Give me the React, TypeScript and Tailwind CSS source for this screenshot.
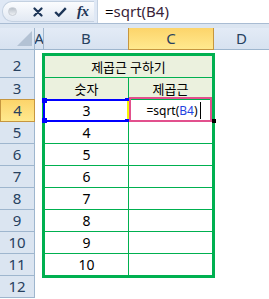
import React from "react";

const rows = [3, 4, 5, 6, 7, 8, 9, 10];

export default function App() {
  return (
    <div className="w-[269px] h-[299px] overflow-hidden bg-white font-['Noto_Sans','Noto_Sans_CJK_KR',sans-serif] select-none">
      {/* formula bar */}
      <div className="h-[24px] flex bg-[#dfe8f5] border-b border-[#a9bcd3]">
        <div className="ml-[2px] mt-[1px] h-[21px] w-[92px] rounded-l-[10px] bg-gradient-to-b from-[#fbfcfe] to-[#e2e9f3] border border-[#c4d1e1] border-r-0 flex items-center">
          <div className="ml-[5px] w-[9px] h-[9px] rounded-full bg-gradient-to-b from-[#b9c0c9] to-[#eef1f5] border border-[#c9ced6]" />
          <svg className="ml-[16px]" width="10" height="10" viewBox="0 0 10 10">
            <path d="M1.5 1.5 L8.5 8.5 M8.5 1.5 L1.5 8.5" stroke="#1d3557" strokeWidth="2.2" strokeLinecap="round" />
          </svg>
          <svg className="ml-[11px]" width="13" height="10" viewBox="0 0 13 10">
            <path d="M1.2 5 L4.8 8.5 L11.8 1.2" stroke="#1d3557" strokeWidth="2.4" fill="none" strokeLinejoin="miter" />
          </svg>
          <span className="ml-[10px] text-[15px] leading-none italic font-bold text-[#1d3557] font-['Liberation_Serif',serif] tracking-[-0.5px]">
            fx
          </span>
        </div>
        <div className="ml-[3px] flex-1 bg-white border-l border-[#c4d1e1] flex items-center pl-[7px] text-[15px] leading-none pb-[1px]">
          <span className="text-black">=</span>
          <span className="text-[#3a1f3a]">sqrt(B4)</span>
        </div>
      </div>
      <div className="h-[4px] bg-[#dbe5f1]" />
      {/* column headers */}
      <div className="h-[22px] flex bg-gradient-to-b from-[#e3ebf6] to-[#d7e2f0] border-b border-[#9eb6ce] text-[15px] text-[#27415f] leading-none">
        <div className="w-[35px] border-r border-[#9eb6ce] relative">
          <svg className="absolute left-0 top-0" width="34" height="21" viewBox="0 0 34 21">
            <path d="M17 18 L32 18 L32 3 Z" fill="#b3c2d4" />
          </svg>
        </div>
        <div className="w-[9px] border-r border-[#9eb6ce] flex items-center justify-center overflow-hidden">A</div>
        <div className="w-[85px] border-r border-[#9eb6ce] flex items-center justify-center">B</div>
        <div className="w-[85px] border border-t-0 border-[#c6963f] bg-gradient-to-b from-[#fcd46a] to-[#ffe98e] flex items-center justify-center -mb-[1px] -ml-[1px] w-[86px]">
          C
        </div>
        <div className="flex-1 flex items-center justify-center">D</div>
      </div>
      {/* body */}
      <div className="flex">
        <div className="w-[35px] shrink-0 border-r border-[#9eb6ce] bg-[#dbe5f1] text-[15px] text-[#27415f] leading-none">
          <div className="h-[28px] border-b border-[#9eb6ce] flex items-center justify-center pt-[3px]">2</div>
          {[3, 4, 5, 6, 7, 8, 9, 10, 11, 12].map((n) =>
            n === 4 ? (
              <div
                key={n}
                className="h-[23px] -mt-[1px] border border-[#c6963f] bg-gradient-to-b from-[#fcd46a] to-[#ffe98e] flex items-center justify-center -mr-[1px]"
              >
                {n}
              </div>
            ) : (
              <div key={n} className="h-[22px] border-b border-[#9eb6ce] flex items-center justify-center">
                {n}
              </div>
            )
          )}
        </div>
        <div className="flex-1 bg-white pl-[7px] pt-[3px]">
          <div className="relative w-[173px] border-[3px] border-[#00b050] text-black">
            <div className="h-[22px] border-b border-[#00b050] bg-[#ebf1de] flex items-center justify-center text-[13px] leading-none font-['Noto_Sans_CJK_KR',sans-serif]">
              제곱근 구하기
            </div>
            <div className="h-[22px] flex border-b border-[#00b050] bg-[#ebf1de] text-[13px] leading-none font-['Noto_Sans_CJK_KR',sans-serif]">
              <div className="w-[84px] border-r border-[#00b050] flex items-center justify-center">숫자</div>
              <div className="flex-1 flex items-center justify-center">제곱근</div>
            </div>
            {rows.map((v, i) => (
              <div
                key={v}
                className={`flex text-[14px] leading-none ${i === rows.length - 1 ? "h-[21px]" : "h-[22px] border-b border-[#00b050]"}`}
              >
                <div className="w-[84px] border-r border-[#00b050] flex items-center justify-center">{v}</div>
                <div className="flex-1 flex items-center justify-center text-[12px]">
                  {i === 0 ? (
                    <span className="flex items-center ml-[6px]">
                      <span>=sqrt(</span>
                      <span className="text-[#1f45e0]">B4</span>
                      <span>)</span>
                      <span className="ml-[2px] w-[1px] h-[17px] bg-black" />
                    </span>
                  ) : null}
                </div>
              </div>
            ))}
            {/* B4 range finder */}
            <div className="absolute left-[-2px] top-[43px] w-[85px] h-[23px] border-2 border-r-0 border-[#0000ff]" />
            <div className="absolute left-[82px] top-[43px] w-[2px] h-[23px] bg-[#f5f500]" />
            <div className="absolute left-[-3px] top-[42px] w-[5px] h-[5px] bg-[#0000ff]" />
            <div className="absolute left-[-3px] top-[62px] w-[5px] h-[5px] bg-[#0000ff]" />
            <div className="absolute left-[80px] top-[42px] w-[4px] h-[3px] bg-[#0000ff]" />
            <div className="absolute left-[80px] top-[63px] w-[4px] h-[3px] bg-[#0000ff]" />
            {/* C4 active */}
            <div className="absolute left-[84px] top-[41px] w-[83px] h-[25px] border-2 border-[#e2508d]" />
            <div className="absolute left-[167px] top-[63px] w-[4px] h-[4px] bg-black" />
          </div>
        </div>
      </div>
    </div>
  );
}
